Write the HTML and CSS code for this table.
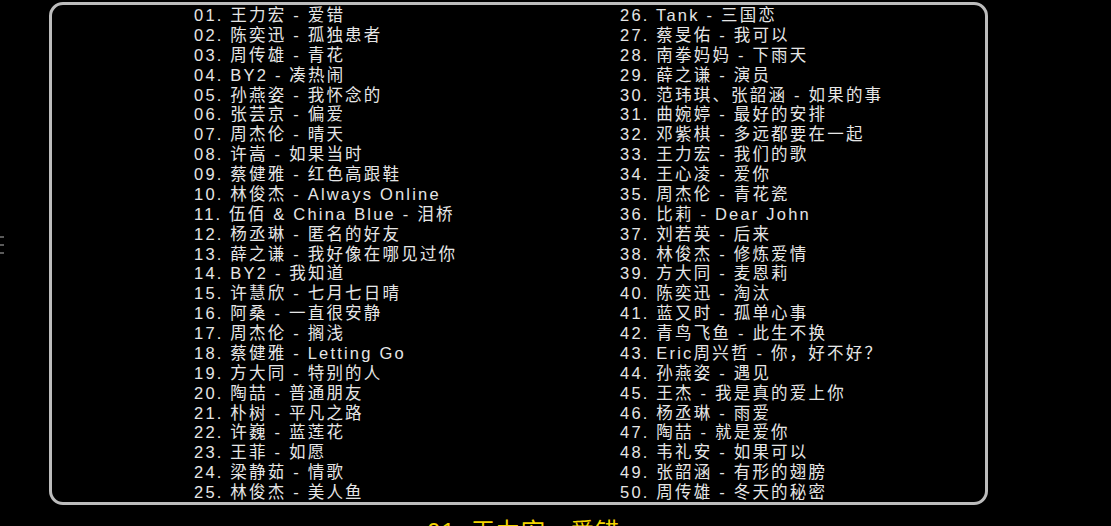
FILE: index.html
```html
<!DOCTYPE html>
<html lang="zh">
<head>
<meta charset="utf-8">
<link rel="stylesheet" href="styles.css">
</head>
<body>
<div class="ticks"><i></i><i></i><i></i></div>
<div class="stage">
  <div class="panel">
    <div class="cols">
      <ol class="col">
        <li>01. 王力宏 - 爱错</li>
        <li>02. 陈奕迅 - 孤独患者</li>
        <li>03. 周传雄 - 青花</li>
        <li>04. BY2 - 凑热闹</li>
        <li>05. 孙燕姿 - 我怀念的</li>
        <li>06. 张芸京 - 偏爱</li>
        <li>07. 周杰伦 - 晴天</li>
        <li>08. 许嵩 - 如果当时</li>
        <li>09. 蔡健雅 - 红色高跟鞋</li>
        <li>10. 林俊杰 - Always Online</li>
        <li>11. 伍佰 &amp; China Blue - 泪桥</li>
        <li>12. 杨丞琳 - 匿名的好友</li>
        <li>13. 薛之谦 - 我好像在哪见过你</li>
        <li>14. BY2 - 我知道</li>
        <li>15. 许慧欣 - 七月七日晴</li>
        <li>16. 阿桑 - 一直很安静</li>
        <li>17. 周杰伦 - 搁浅</li>
        <li>18. 蔡健雅 - Letting Go</li>
        <li>19. 方大同 - 特别的人</li>
        <li>20. 陶喆 - 普通朋友</li>
        <li>21. 朴树 - 平凡之路</li>
        <li>22. 许巍 - 蓝莲花</li>
        <li>23. 王菲 - 如愿</li>
        <li>24. 梁静茹 - 情歌</li>
        <li>25. 林俊杰 - 美人鱼</li>
      </ol>
      <ol class="col">
        <li>26. Tank - 三国恋</li>
        <li>27. 蔡旻佑 - 我可以</li>
        <li>28. 南拳妈妈 - 下雨天</li>
        <li>29. 薛之谦 - 演员</li>
        <li>30. 范玮琪、张韶涵 - 如果的事</li>
        <li>31. 曲婉婷 - 最好的安排</li>
        <li>32. 邓紫棋 - 多远都要在一起</li>
        <li>33. 王力宏 - 我们的歌</li>
        <li>34. 王心凌 - 爱你</li>
        <li>35. 周杰伦 - 青花瓷</li>
        <li>36. 比莉 - Dear John</li>
        <li>37. 刘若英 - 后来</li>
        <li>38. 林俊杰 - 修炼爱情</li>
        <li>39. 方大同 - 麦恩莉</li>
        <li>40. 陈奕迅 - 淘汰</li>
        <li>41. 蓝又时 - 孤单心事</li>
        <li>42. 青鸟飞鱼 - 此生不换</li>
        <li>43. Eric周兴哲 - 你，好不好？</li>
        <li>44. 孙燕姿 - 遇见</li>
        <li>45. 王杰 - 我是真的爱上你</li>
        <li>46. 杨丞琳 - 雨爱</li>
        <li>47. 陶喆 - 就是爱你</li>
        <li>48. 韦礼安 - 如果可以</li>
        <li>49. 张韶涵 - 有形的翅膀</li>
        <li>50. 周传雄 - 冬天的秘密</li>
      </ol>
    </div>
  </div>
  <div class="now">01. 王力宏 - 爱错</div>
</div>
</body>
</html>
```

FILE: styles.css
```css
html, body {
  margin: 0;
  padding: 0;
  background: #000;
  width: 1111px;
  height: 526px;
  overflow: hidden;
}

body {
  font-family: "Liberation Sans", "Noto Sans CJK SC", sans-serif;
  color: #e6e6e6;
  position: relative;
}

.ticks {
  position: absolute;
  left: 0;
  top: 236px;
  display: flex;
  flex-direction: column;
  gap: 6px;
}

.ticks i {
  display: block;
  width: 4px;
  height: 2px;
  background: #5a5a5a;
}

.stage {
  padding: 2px 0 0 49px;
  width: 939px;
}

.panel {
  box-sizing: border-box;
  height: 503px;
  border: 3px solid #bcbcbc;
  border-radius: 14px;
  padding: 1px 0 0 142px;
}

.cols {
  display: grid;
  grid-template-columns: 426px 1fr;
}

.col {
  list-style: none;
  margin: 0;
  padding: 0;
}

.col li {
  font-size: 16.5px;
  line-height: 19.875px;
  height: 19.875px;
  letter-spacing: 2.2px;
  white-space: nowrap;
}

.now {
  margin-top: 13px;
  padding-left: 378px;
  font-size: 24px;
  line-height: 28px;
  color: #f4d600;
  letter-spacing: 1px;
  white-space: nowrap;
}
```
